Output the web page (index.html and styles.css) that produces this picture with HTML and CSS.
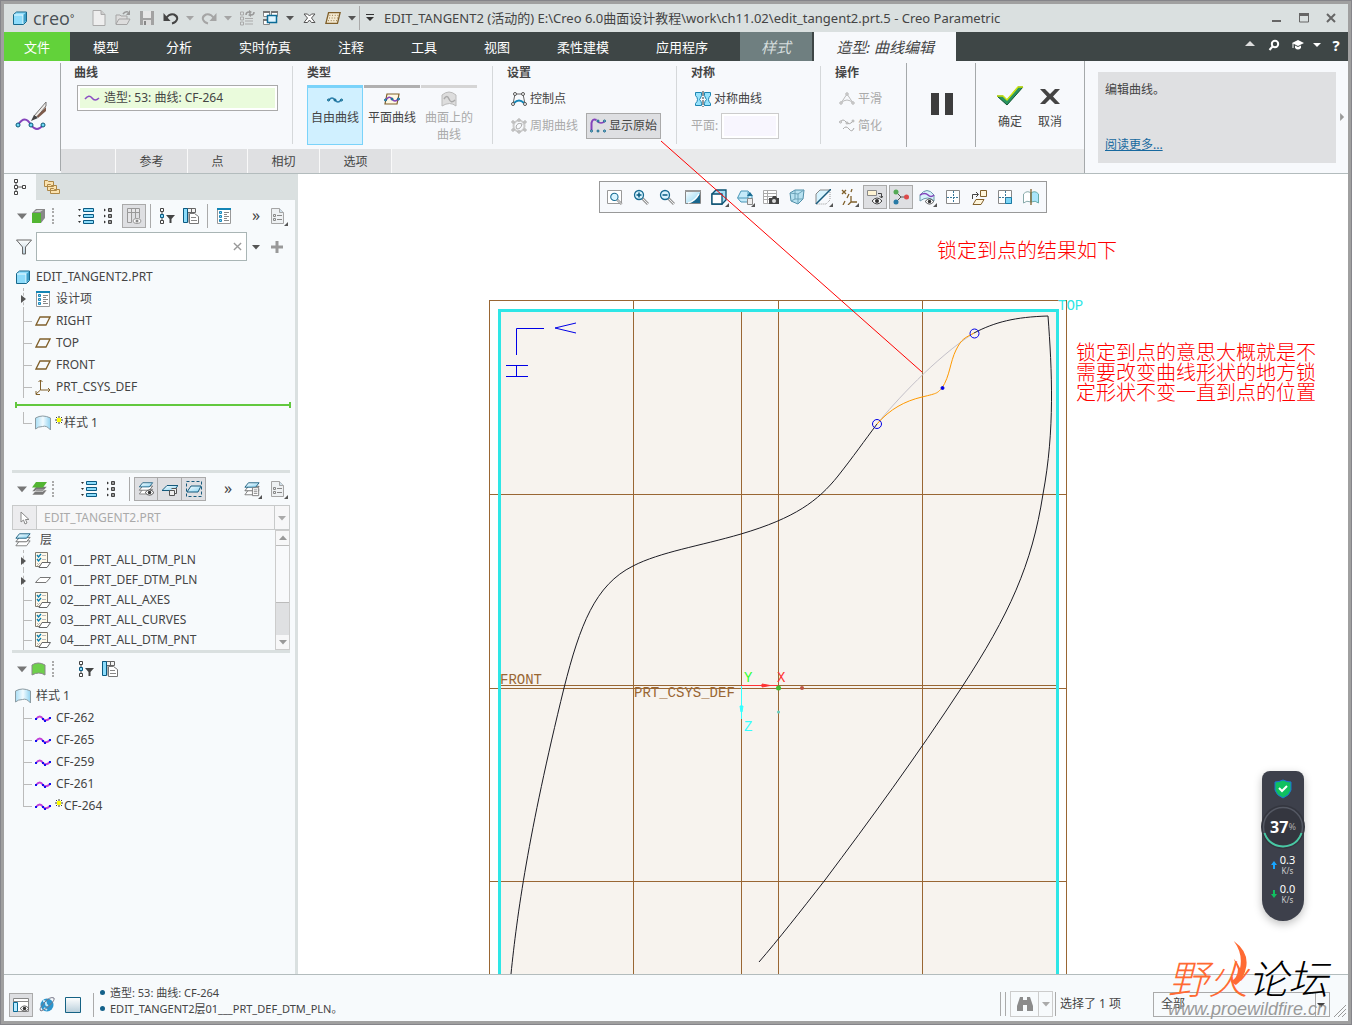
FILE: index.html
```html
<!DOCTYPE html>
<html lang="zh-CN">
<head>
  <meta charset="UTF-8">
  <meta name="viewport" content="width=device-width, initial-scale=1.0">
  <title>EDIT_TANGENT2 - Creo Parametric</title>
  <link rel="stylesheet" href="styles.css">
</head>
<body>
  <!-- shared icons -->
  <svg class="icon-defs" aria-hidden="true">
    <defs>
      <linearGradient id="g-blue" x1="0" y1="0" x2="1" y2="1"><stop offset="0" stop-color="#fff"/><stop offset="1" stop-color="#86d3f2"/></linearGradient>
      <linearGradient id="g-surf" x1="0" x2="1"><stop offset="0" stop-color="#a9def5"/><stop offset=".5" stop-color="#f2fbff"/><stop offset="1" stop-color="#8fd2f0"/></linearGradient>
      <linearGradient id="g-steel" x1="0" y1="0" x2="0" y2="1"><stop offset="0" stop-color="#fff"/><stop offset="1" stop-color="#b9cfdb"/></linearGradient>
    </defs>
    <symbol id="i-cube" viewBox="0 0 16 16"><path d="M1.500 4.500l3-2.500h10v9.500l-3 3h-10z" fill="#8edcfb" stroke="#17688c"/><path d="M2 5h9v9" fill="none" stroke="#e8faff"/><path d="M11.500 5l2.500-2.500V11l-2.500 3z" fill="#3f9fc8"/></symbol>
    <symbol id="i-new" viewBox="0 0 16 16"><path d="M2 .5h8l4 4v11H2z" fill="#eee" stroke="#aaa"/><path d="M10 .5v4h4" fill="#ccc" stroke="#aaa"/></symbol>
    <symbol id="i-open" viewBox="0 0 16 16"><path d="M1 14V5h4l1 1h6v3M1 14l3-5h11l-3 5.500H1z" fill="#ddd" stroke="#a5a5a5"/><path d="M8 4q2-3 5-2" fill="none" stroke="#999" stroke-width="1.500"/><path d="M15 0v5h-4z" fill="#999"/></symbol>
    <symbol id="i-save" viewBox="0 0 16 16"><path d="M1 1h14v14H1z" fill="#a2a2a2"/><path d="M4 1h8v7H4z" fill="#e6e6e6"/><path d="M4 10h8v5H4z" fill="#ddd"/><path d="M5 11h2v4H5z" fill="#888"/></symbol>
    <symbol id="i-undo" viewBox="0 0 16 16"><path d="M3 8q4-5 8-3.500 4 2 3 5-1 3-5 4" fill="none" stroke="currentColor" stroke-width="2"/><path d="M.5 3v8h7z" fill="currentColor"/></symbol>
    <symbol id="i-down" viewBox="0 0 8 8"><path d="M0 2h8L4 6.500z" fill="currentColor"/></symbol>
    <symbol id="i-regen" viewBox="0 0 16 16"><path d="M1.500 2h3v3h-3zM1.500 7h3v3h-3zM1.500 12h3v3h-3zM6 8.500h8M6 11h8M6 14h8" fill="none" stroke="#aaa"/><path d="M7 5q0-3 3-3M15 2q0 3-3 3" fill="none" stroke="#999" stroke-width="1.500"/><path d="M10 0l3 2-3 2zM12 3v4l-3-2z" fill="#999"/></symbol>
    <symbol id="i-windows" viewBox="0 0 16 16"><path d="M.5 1.500h6v5h-6zM8.500 1.500h6v5h-6zM.5 9.500h6v5h-6z" fill="#fff" stroke="#888"/><path d="M0 1h7v2H0zM8 1h7v2H8zM0 9h4v2H0z" fill="#777"/><path d="M4.500 5.500h9v7h-9z" fill="#dff5ff" stroke="#0a6b96" stroke-width="1.500"/></symbol>
    <symbol id="i-x" viewBox="0 0 16 16"><path d="M3 4h3.500L8.500 6l2-2H14l-3.500 4L14 12.500h-3.500l-2-2.500-2 2.500H3L6.500 8z" fill="#fff" stroke="#555"/></symbol>
    <symbol id="i-grid" viewBox="0 0 18 16"><path d="M4 2h13l-3 12H1z" fill="#f4ead2" stroke="#80602b" stroke-width="1.500"/><path d="M5 5h10M4.500 8H15M3.500 11H14" stroke="#80602b" stroke-dasharray="1 2"/></symbol>
    <symbol id="i-wave" viewBox="0 0 16 16"><path d="M1 9q4-5 7-1t7 0" fill="none" stroke="#8c4fc4" stroke-width="1.500"/></symbol>
    <symbol id="i-free" viewBox="0 0 16 16"><path d="M2 9q3-4 6 0t6 0" fill="none" stroke="#2a7fac" stroke-width="1.500"/><g fill="#65d0f5" stroke="#075a80"><circle cx="1.500" cy="9" r="1"/><circle cx="8" cy="9" r="1"/><circle cx="14.500" cy="9" r="1"/></g></symbol>
    <symbol id="i-planar" viewBox="0 0 16 16"><path d="M3 3h12l-2 10H1z" fill="#fff8e3" stroke="#80602b" stroke-width="1.200"/><path d="M2 9q3-5 6-1t6 0" fill="none" stroke="#8443bb" stroke-width="1.500"/><g fill="#65d0f5" stroke="#075a80"><circle cx="1.500" cy="9" r="1"/><circle cx="8" cy="8" r="1"/><circle cx="14.500" cy="8" r="1"/></g></symbol>
    <symbol id="i-onsurf" viewBox="0 0 16 16"><path d="M1 15V4q7-6 14 0v11q-6-5-14 0z" fill="#ddd" stroke="#bbb"/><path d="M3 8q3-5 5 0t6 1" fill="none" stroke="#aaa" stroke-width="1.500"/></symbol>
    <symbol id="i-control" viewBox="0 0 16 16"><path d="M2 13L4 3h8l2 10" fill="none" stroke="#666"/><path d="M3 12q5-5 10 0" fill="none" stroke="#1485b5" stroke-width="2"/><g fill="#fff" stroke="#555"><circle cx="2" cy="13" r="1.500"/><circle cx="4" cy="3" r="1.500"/><circle cx="12" cy="3" r="1.500"/><circle cx="14" cy="13" r="1.500"/></g></symbol>
    <symbol id="i-period" viewBox="0 0 16 16"><circle cx="8" cy="8" r="5.500" fill="none" stroke="#ccc" stroke-width="2"/><path d="M5 9q1-5 6-3-1 5-5 5z" fill="none" stroke="#aaa"/><g fill="#eee" stroke="#aaa"><circle cx="2" cy="4" r="1.200"/><circle cx="8" cy="2" r="1.200"/><circle cx="14" cy="4" r="1.200"/><circle cx="14" cy="12" r="1.200"/><circle cx="8" cy="14" r="1.200"/><circle cx="2" cy="12" r="1.200"/></g></symbol>
    <symbol id="i-orig" viewBox="0 0 16 16"><path d="M1.500 12V5q1-5 5-3" fill="none" stroke="#8443bb" stroke-width="2"/><path d="M7 3q4 4 8 0" fill="none" stroke="#8443bb" stroke-width="1.500"/><g fill="#b8ecff" stroke="#075a80"><circle cx="1.500" cy="13" r="1"/><circle cx="8" cy="13" r="1"/><circle cx="14.500" cy="13" r="1"/><circle cx="8" cy="3" r="1"/><circle cx="14.500" cy="3" r="1"/></g></symbol>
    <symbol id="i-sym" viewBox="0 0 16 16"><path d="M.5 1.500h6v3q-1 3-2 4 2 2 2 4v2h-6v-2q2-2 2-4t-2-4zM15.500 1.500h-6v3q1 3 2 4-2 2-2 4v2h6v-2q-2-2-2-4t2-4z" fill="#97e2fb" stroke="#1b85b2"/><path d="M8 0v16" stroke="#333" stroke-dasharray="5 1 2 1"/></symbol>
    <symbol id="i-smooth" viewBox="0 0 16 16"><path d="M2 12L8 3l6 9M2 12q6-6 12 0" fill="none" stroke="#bbb"/><g fill="#fff" stroke="#aaa"><circle cx="2" cy="12" r="1.200"/><circle cx="8" cy="3" r="1.200"/><circle cx="14" cy="12" r="1.200"/></g></symbol>
    <symbol id="i-simple" viewBox="0 0 16 16"><path d="M1 4q3-4 6 0t7-1M4 11q3-4 6 0t5-1" fill="none" stroke="#aaa"/><g fill="#fff" stroke="#aaa"><circle cx="1.500" cy="4" r="1"/><circle cx="8" cy="5" r="1"/><circle cx="14" cy="3" r="1"/></g></symbol>
    <symbol id="i-nodes" viewBox="0 0 16 16"><path d="M4 3v10M4 8h7" stroke="#555"/><g fill="#fff" stroke="#444"><path d="M2.500.5h3v3h-3zM2.500 6.500h3v3h-3zM2.500 12.500h3v3h-3zM10.500 6.500h3v3h-3z"/></g></symbol>
    <symbol id="i-folders" viewBox="0 0 16 16"><g fill="#fbe2ae" stroke="#ad8746"><path d="M.5 1.500h3l1 1h5v5h-9zM3.500 5.500h3l1 1h5v5h-9zM6.500 9.500h3l1 1h5v4h-9z"/></g></symbol>
    <symbol id="i-expand" viewBox="0 0 16 16"><path d="M5.500.5h10v3h-10zM5.500 6.500h10v3h-10zM5.500 12.500h10v3h-10z" fill="#8cdcfb" stroke="#0a5a82"/><path d="M0 1h3l-1.500 2zM0 7h3l-1.500 2zM0 13h3l-1.500 2z" fill="#333"/></symbol>
    <symbol id="i-collapse" viewBox="0 0 16 16"><path d="M6.500.5h3v3h-3zM6.500 6.500h3v3h-3zM6.500 12.500h3v3h-3z" fill="#999" stroke="#444"/><path d="M2 .5L4 2 2 3.500zM2 6.500L4 8 2 9.500zM2 12.500L4 14l-2 1.500z" fill="#333"/></symbol>
    <symbol id="i-cols" viewBox="0 0 16 16"><path d="M1.500.5h12v4h-12zM1.500 4.500h4v10h-4zM5.500.5v4M9.500.5v10M13.500 4v6" fill="#e6e6e8" stroke="#999"/><ellipse cx="11" cy="13" rx="4" ry="2.500" fill="#fff" stroke="#999"/><circle cx="11" cy="13" r="1.500" fill="#888"/></symbol>
    <symbol id="i-nodefilter" viewBox="0 0 16 16"><path d="M3 2v12" stroke="#444"/><path d="M1.500.5h3v3h-3zM1.500 12.500h3v3h-3z" fill="#fff" stroke="#444"/><path d="M1.500 6.500h3v3h-3z" fill="#8cdcfb" stroke="#0a5a82"/><path d="M7 7h9l-3.500 4v4h-2v-4z" fill="#444"/></symbol>
    <symbol id="i-coldoc" viewBox="0 0 16 16"><path d="M.5.5h12v4h-12zM8.500 0v5M5 4.500v10" fill="#f4f4f4" stroke="#666"/><path d="M.5.5h4v14h-4z" fill="#8cdcfb" stroke="#0a5a82"/><path d="M6.500 5.500h5l4 3v7h-9z" fill="#fff" stroke="#777"/><path d="M8 9.500h5M8 12.500h6" stroke="#888"/></symbol>
    <symbol id="i-list" viewBox="0 0 16 16"><path d="M1.500.5h13v15h-13z" fill="#fff" stroke="#999"/><path d="M1 1h14" stroke="#1485b5" stroke-width="2"/><path d="M3.500 3.500h2v2h-2zM3.500 7.500h2v2h-2zM3.500 11.500h2v2h-2z" fill="#7ed6f8" stroke="#1d86b8"/><path d="M8 4.500h5M8 6.500h3M8 8.500h5M8 10.500h3M8 12.500h5" stroke="#888"/></symbol>
    <symbol id="i-setdoc" viewBox="0 0 16 16"><path d="M1.500.5h8l4 4v11h-12z" fill="#eef1f3" stroke="#a5a5a5"/><path d="M9.500.5v4h4" fill="#cfe0ea" stroke="#a5a5a5"/><path d="M3.500 6.500h2v2h-2zM3.500 10.500h2v2h-2zM7 7.500h5M7 11.500h5" fill="none" stroke="#888"/></symbol>
    <symbol id="i-layers" viewBox="0 0 18 16"><path d="M5 9h12l-4 5.500H1z" fill="#fff" stroke="#777"/><path d="M5 5h12l-4 5H1z" fill="#fff" stroke="#666"/><path d="M5 1h12l-4 5H1z" fill="url(#g-blue)" stroke="#155a7c"/></symbol>
    <symbol id="i-eye" viewBox="0 0 10 8"><path d="M0 4q5-6 10 0-5 6-10 0" fill="#fff" stroke="#444"/><circle cx="5" cy="4" r="2" fill="#333"/></symbol>
    <symbol id="i-plane" viewBox="0 0 16 16"><path d="M5 4h10l-4 8H1z" fill="none" stroke="#80602b" stroke-width="1.300"/></symbol>
    <symbol id="i-csys" viewBox="0 0 16 16"><path d="M5.500 1v10H15M5.500 11L1 15M3.500 3l2-2 2 2M13 9l2 2-2 2M1 12v3.500h4" fill="none" stroke="#80602b"/></symbol>
    <symbol id="i-surf" viewBox="0 0 16 16"><path d="M.5 14V3q7-4 15 0v12q-4-5-8-3.500Q3 11.500.5 14z" fill="url(#g-surf)" stroke="#8b9ba2"/></symbol>
    <symbol id="i-layer" viewBox="0 0 16 16"><path d="M.5.500h12v14H.5z" fill="#fff9ea" stroke="#807c70"/><path d="M2 3l1.500 2L6 2M2 7l1.500 2L6 6" fill="none" stroke="#087fb0" stroke-width="1.300"/><path d="M7 3.500h4M7 7.500h4M2 11l3 3M5 11l-3 3" stroke="#bbb"/><path d="M7 10.500h8.500L12 15.500H4z" fill="#fff" stroke="#666"/></symbol>
    <symbol id="i-flat" viewBox="0 0 16 16"><path d="M5 5.500h10.500l-4.500 5H.5z" fill="#fff" stroke="#777"/></symbol>
    <symbol id="i-curve" viewBox="0 0 16 16"><path d="M1 9q4-5 7 0 3 3 7-1" fill="none" stroke="#c03fd8" stroke-width="2"/><path d="M0 8h2v2H0zM7 8h2v2H7zM9 10h2v2H9zM14 7h2v2h-2z" fill="#1010f0"/></symbol>
    <symbol id="i-star" viewBox="0 0 8 8"><path d="M4 0v8M0 4h8M1 1l6 6M7 1L1 7" stroke="#443" stroke-width="1"/><path d="M2 2h4v4H2z" fill="#ff0"/></symbol>
    <symbol id="i-glass" viewBox="0 0 16 16"><path d="M9 9l6 6" stroke="#999" stroke-width="3"/><path d="M9 9l6 6" stroke="#eee"/><circle cx="6" cy="6" r="4.500" fill="#d9f4ff" stroke="#176b92" stroke-width="1.300"/></symbol>
    <symbol id="i-funnel" viewBox="0 0 16 16"><path d="M.5 1h15l-6 7v7h-3V8z" fill="url(#g-steel)" stroke="#666"/></symbol>
  </svg>

  <header class="titlebar">
    <div class="brand"><svg class="ic"><use href="#i-cube"/></svg><span>creo</span><i>°</i></div>
    <div class="quick">
      <button class="tb" aria-label="新建"><svg class="ic"><use href="#i-new"/></svg></button>
      <button class="tb" aria-label="打开"><svg class="ic"><use href="#i-open"/></svg></button>
      <button class="tb" aria-label="保存"><svg class="ic"><use href="#i-save"/></svg></button>
      <button class="tb" aria-label="撤消"><svg class="ic"><use href="#i-undo"/></svg></button>
      <button class="tb drop faded" aria-label="撤消列表"><svg><use href="#i-down"/></svg></button>
      <button class="tb faded flip" aria-label="重做"><svg class="ic"><use href="#i-undo"/></svg></button>
      <button class="tb drop faded" aria-label="重做列表"><svg><use href="#i-down"/></svg></button>
      <button class="tb" aria-label="重新生成"><svg class="ic"><use href="#i-regen"/></svg></button>
      <button class="tb" aria-label="窗口"><svg class="ic"><use href="#i-windows"/></svg></button>
      <button class="tb drop" aria-label="窗口列表"><svg><use href="#i-down"/></svg></button>
      <button class="tb" aria-label="关闭窗口"><svg class="ic"><use href="#i-x"/></svg></button>
      <button class="tb" aria-label="栅格"><svg class="ic"><use href="#i-grid"/></svg></button>
      <button class="tb drop" aria-label="栅格列表"><svg><use href="#i-down"/></svg></button>
      <span class="vsep"></span>
      <button class="tb more" aria-label="自定义"><svg viewBox="0 0 8 8"><path d="M0 0h8v1H0zM0 3h8L4 7z" fill="#333"/></svg></button>
    </div>
    <h1>EDIT_TANGENT2 (活动的) E:\Creo 6.0曲面设计教程\work\ch11.02\edit_tangent2.prt.5 - Creo Parametric</h1>
    <div class="winbtns">
      <button aria-label="最小化"><svg viewBox="0 0 12 12"><path d="M1 8h9v2H1z" fill="#666"/></svg></button>
      <button aria-label="最大化"><svg viewBox="0 0 12 12"><path d="M1.500 2h9v8h-9z" fill="none" stroke="#666"/><path d="M1 1h10v3H1z" fill="#666"/></svg></button>
      <button aria-label="关闭"><svg viewBox="0 0 12 12"><path d="M2 2l8 8M10 2l-8 8" stroke="#666" stroke-width="2"/></svg></button>
    </div>
  </header>

  <nav class="tabs">
    <button class="file">文件</button>
    <button>模型</button><button>分析</button><button>实时仿真</button><button>注释</button><button>工具</button><button>视图</button><button>柔性建模</button><button>应用程序</button>
    <button class="ctx">样式</button>
    <button class="ctx active">造型: 曲线编辑</button>
    <div class="tabtools">
      <button aria-label="折叠功能区"><svg viewBox="0 0 12 12"><path d="M1 7h10L6 2z" fill="#ddd"/></svg></button>
      <button aria-label="搜索"><svg viewBox="0 0 12 12"><circle cx="7" cy="5" r="3.200" fill="none" stroke="#fff" stroke-width="2"/><path d="M4.500 7.500L1.500 11" stroke="#fff" stroke-width="2"/></svg></button>
      <button aria-label="学习"><svg viewBox="0 0 12 12"><path d="M0 4l6-3 6 3-6 3zM3 6.500l3 1.500 3-1.500V9q-3 3-6 0z" fill="#fff"/><path d="M1 4v5" stroke="#fff"/></svg></button>
      <button class="slim" aria-label="学习列表"><svg viewBox="0 0 12 12"><path d="M2 4h8L6 8z" fill="#fff"/></svg></button>
      <button class="help" aria-label="帮助">?</button>
    </div>
  </nav>

  <section class="ribbon">
    <div class="ribbon-tool">
      <svg viewBox="0 0 34 34"><path d="M3 25q7-11 13 0 6 8 12 0" fill="none" stroke="#8443bb" stroke-width="2"/><path d="M19 16L31 2v4L22 17z" fill="#eeeae6" stroke="#777"/><path d="M22 16l9-9v4l-8 7z" fill="#7e5b4b"/><path d="M16 21l3-6 4 3z" fill="#444"/><g fill="#6ed6f6" stroke="#0c5876"><circle cx="3" cy="25" r="2"/><circle cx="16" cy="25" r="2"/><circle cx="28" cy="25" r="2"/></g></svg>
    </div>
    <div class="ribbon-main">
      <div class="groups">
        <div class="group g-curve">
          <h2>曲线</h2>
          <div class="collector"><svg class="ic"><use href="#i-wave"/></svg><input type="text" aria-label="曲线" value="造型: 53: 曲线: CF-264" readonly></div>
        </div>
        <div class="group g-type">
          <h2>类型</h2>
          <div class="types">
            <button class="on"><svg class="ic"><use href="#i-free"/></svg>自由曲线</button>
            <button><svg class="ic"><use href="#i-planar"/></svg>平面曲线</button>
            <button disabled><svg class="ic"><use href="#i-onsurf"/></svg>曲面上的曲线</button>
          </div>
        </div>
        <div class="group g-set">
          <h2>设置</h2>
          <div class="grow"><button class="cmd"><svg class="ic"><use href="#i-control"/></svg>控制点</button></div>
          <div class="grow"><button class="cmd" disabled><svg class="ic"><use href="#i-period"/></svg>周期曲线</button><button class="cmd pressed"><svg class="ic"><use href="#i-orig"/></svg>显示原始</button></div>
        </div>
        <div class="group g-sym">
          <h2>对称</h2>
          <div class="grow"><button class="cmd"><svg class="ic"><use href="#i-sym"/></svg>对称曲线</button></div>
          <div class="grow"><label for="plane">平面:</label><input id="plane" type="text" disabled></div>
        </div>
        <div class="group g-op">
          <h2>操作</h2>
          <div class="grow"><button class="cmd" disabled><svg class="ic"><use href="#i-smooth"/></svg>平滑</button></div>
          <div class="grow"><button class="cmd" disabled><svg class="ic"><use href="#i-simple"/></svg>简化</button></div>
        </div>
        <div class="group g-pause"><button aria-label="暂停"><svg viewBox="0 0 24 24"><path d="M1 1h8v22H1zM15 1h8v22h-8z" fill="#3d3d3d"/></svg></button></div>
        <div class="group g-ok">
          <button><svg viewBox="0 0 28 24"><path d="M1 12h6l4 4L22 3h5L11 21z" fill="#299460" stroke="#153"/><path d="M1 12h6l4 4L22 3h5" fill="none" stroke="#cde611" stroke-width="1.500"/></svg>确定</button>
          <button><svg viewBox="0 0 28 24"><path d="M4 5h5l5 5 5-5h5l-7 7.500 7 7.500h-5l-5-5-5 5H4l7-7.500z" fill="#444"/></svg>取消</button>
        </div>
      </div>
      <div class="subtabs"><span></span><button>参考</button><button>点</button><button>相切</button><button>选项</button></div>
    </div>
    <aside class="tip">
      <div><p>编辑曲线。</p><a href="#">阅读更多...</a></div>
      <svg viewBox="0 0 6 10"><path d="M0 0l5 5-5 5z" fill="#999"/></svg>
    </aside>
  </section>

  <main class="work">
    <aside class="side">
      <div class="side-tabs">
        <button class="on" aria-label="模型树"><svg class="ic"><use href="#i-nodes"/></svg></button>
        <button aria-label="文件夹浏览器"><svg class="ic"><use href="#i-folders"/></svg></button>
      </div>

      <div class="side-bar">
        <svg class="tri"><use href="#i-down"/></svg>
        <svg class="ic mark" viewBox="0 0 16 16"><path d="M1 5l4-4h9v9l-4 5H1z" fill="#888"/><path d="M1 5h9v10H1z" fill="#52b532"/><path d="M3 4l3-2h6l-3 2z" fill="#ccc"/></svg>
        <span class="dots"></span>
        <button class="tb push" aria-label="全部展开"><svg class="ic"><use href="#i-expand"/></svg></button>
        <button class="tb" aria-label="全部折叠"><svg class="ic"><use href="#i-collapse"/></svg></button>
        <button class="tb pressed" aria-label="树列"><svg class="ic"><use href="#i-cols"/></svg></button>
        <span class="vsep"></span>
        <button class="tb" aria-label="树过滤器"><svg class="ic"><use href="#i-nodefilter"/></svg></button>
        <button class="tb" aria-label="列设置"><svg class="ic"><use href="#i-coldoc"/></svg></button>
        <span class="vsep"></span>
        <button class="tb" aria-label="设计项"><svg class="ic"><use href="#i-list"/></svg></button>
        <button class="tb chev" aria-label="更多">»</button>
        <button class="tb corner" aria-label="设置"><svg class="ic"><use href="#i-setdoc"/></svg></button>
      </div>

      <div class="filter">
        <svg class="ic"><use href="#i-funnel"/></svg>
        <div class="search"><input type="text" aria-label="过滤"><button aria-label="清除"><svg viewBox="0 0 10 10"><path d="M1 1l8 8M9 1L1 9" stroke="#999" stroke-width="1.500"/></svg></button></div>
        <button class="tb drop" aria-label="过滤列表"><svg><use href="#i-down"/></svg></button>
        <button class="tb" aria-label="添加"><svg viewBox="0 0 12 12" class="plus"><path d="M4.500 0h3v4.500H12v3H7.500V12h-3V7.500H0v-3h4.500z" fill="#999"/></svg></button>
      </div>

      <div class="tree model">
        <div class="root"><svg class="ic"><use href="#i-cube"/></svg>EDIT_TANGENT2.PRT</div>
        <ul>
          <li class="more"><svg class="ic"><use href="#i-list"/></svg>设计项</li>
          <li><svg class="ic"><use href="#i-plane"/></svg>RIGHT</li>
          <li><svg class="ic"><use href="#i-plane"/></svg>TOP</li>
          <li><svg class="ic"><use href="#i-plane"/></svg>FRONT</li>
          <li><svg class="ic"><use href="#i-csys"/></svg>PRT_CSYS_DEF</li>
        </ul>
        <div class="insert"></div>
        <ul><li class="last"><svg class="ic"><use href="#i-surf"/></svg><svg class="star"><use href="#i-star"/></svg>样式 1</li></ul>
      </div>

      <div class="split"></div>

      <div class="side-bar layerbar">
        <svg class="tri"><use href="#i-down"/></svg>
        <svg class="ic mark" viewBox="0 0 16 16"><path d="M5 9h11l-4 5H1zM5 5.500h11l-4 5H1z" fill="#777" stroke="#fff" stroke-width=".5"/><path d="M5 1h11l-4 5.500H1z" fill="#52b532"/></svg>
        <span class="dots"></span>
        <button class="tb push" aria-label="全部展开"><svg class="ic"><use href="#i-expand"/></svg></button>
        <button class="tb" aria-label="全部折叠"><svg class="ic"><use href="#i-collapse"/></svg></button>
        <span class="vsep"></span>
        <button class="tb pressed" aria-label="显示层"><svg class="ic" viewBox="0 0 18 16"><use href="#i-layers" width="18" height="15"/><use href="#i-eye" x="8" y="8" width="10" height="8"/></svg></button>
        <button class="tb pressed" aria-label="层项"><svg class="ic" viewBox="0 0 16 16"><path d="M5 4.500h11l-4 5H0z" fill="url(#g-blue)" stroke="#155a7c"/><path d="M7.500 9.500h5v5h-5zM9.500 7.500h5v5h-2" fill="#eee" stroke="#555"/></svg></button>
        <button class="tb pressed" aria-label="隔离层"><svg class="ic" viewBox="0 0 16 16"><path d="M5 5h10l-3 6H1z" fill="url(#g-blue)" stroke="#155a7c"/><path d="M.5.5h15v15H.5z" fill="none" stroke="#175a7c" stroke-dasharray="3 2"/></svg></button>
        <button class="tb chev" aria-label="更多">»</button>
        <button class="tb corner" aria-label="层设置"><svg class="ic" viewBox="0 0 18 16"><use href="#i-layers" width="18" height="16"/><path d="M9.500 6.500h7v9h-7z" fill="#fff" stroke="#777"/><path d="M11 9h4M11 11h4M11 13h4" stroke="#888"/></svg></button>
        <button class="tb corner" aria-label="设置"><svg class="ic"><use href="#i-setdoc"/></svg></button>
      </div>

      <div class="picker">
        <button disabled aria-label="选择"><svg viewBox="0 0 10 14"><path d="M1 1v10l2.500-2L5 13l2-1-1.500-3.500H9z" fill="#fff" stroke="#888"/></svg></button>
        <select disabled aria-label="活动模型"><option>EDIT_TANGENT2.PRT</option></select>
        <svg class="caret"><use href="#i-down"/></svg>
      </div>

      <div class="layerbox">
        <div class="tree layers">
          <div class="root"><svg class="ic"><use href="#i-layers"/></svg>层</div>
          <ul>
            <li class="more"><svg class="ic"><use href="#i-layer"/></svg>01___PRT_ALL_DTM_PLN</li>
            <li class="more"><svg class="ic"><use href="#i-flat"/></svg>01___PRT_DEF_DTM_PLN</li>
            <li><svg class="ic"><use href="#i-layer"/></svg>02___PRT_ALL_AXES</li>
            <li><svg class="ic"><use href="#i-layer"/></svg>03___PRT_ALL_CURVES</li>
            <li><svg class="ic"><use href="#i-layer"/></svg>04___PRT_ALL_DTM_PNT</li>
          </ul>
        </div>
        <div class="scroll"><button class="up" aria-label="向上"><svg><use href="#i-down"/></svg></button><span class="thumb"></span><button aria-label="向下"><svg><use href="#i-down"/></svg></button></div>
      </div>

      <div class="split"></div>

      <div class="side-bar stylebar">
        <svg class="tri"><use href="#i-down"/></svg>
        <svg class="ic mark" viewBox="0 0 16 16"><path d="M1 14V4q6-4 13 0v10q-6-4-13 0z" fill="#6ed04b" stroke="#888"/></svg>
        <span class="dots"></span>
        <button class="tb push" aria-label="树过滤器"><svg class="ic"><use href="#i-nodefilter"/></svg></button>
        <button class="tb" aria-label="列设置"><svg class="ic"><use href="#i-coldoc"/></svg></button>
      </div>
      <div class="tree styles">
        <div class="root"><svg class="ic"><use href="#i-surf"/></svg>样式 1</div>
        <ul>
          <li><svg class="ic"><use href="#i-curve"/></svg>CF-262</li>
          <li><svg class="ic"><use href="#i-curve"/></svg>CF-265</li>
          <li><svg class="ic"><use href="#i-curve"/></svg>CF-259</li>
          <li><svg class="ic"><use href="#i-curve"/></svg>CF-261</li>
          <li class="last"><svg class="ic"><use href="#i-curve"/></svg><svg class="star"><use href="#i-star"/></svg>CF-264</li>
        </ul>
      </div>
    </aside>

    <section class="view">
      <!-- datum planes, style curves, csys -->
      <svg class="model-svg" viewBox="298 174 1050 800" preserveAspectRatio="xMinYMin meet">
        <path d="M500 311h558v663H500z" fill="#f7f3ee"/>
        <g fill="none" stroke="#996633" shape-rendering="crispEdges">
          <path d="M489.500 974V300.500h577V974M633.500 300v674M741.500 311v663M778.500 300v674M922.500 300v674M490 494.500h577M490 688.500h577M500 685.500h558M490 881.500h577"/>
          <path d="M499.500 974V310.500h558V974" stroke="#2ee6e6" stroke-width="3"/>
        </g>
        <g fill="none" stroke="#1c1c24">
          <path d="M511 974C517 915 528 835 564 688C580 625 595 585 633 566C660 552 700 546 741 534C795 518 818 501 838 476C853 457 865 440 877 424"/>
          <path d="M974 333C995 322 1015 317 1048 316C1052 370 1055 430 1043 494C1032 565 1009 615 962 687C916 757 870 820 825 880C800 912 778 940 759 962"/>
          <path d="M877 424C895 402 935 358 974 333" stroke="#c3c0c8"/>
          <path d="M877 424C890 409 905 401 922 397S937 393 942 388C950 376 950 362 956 350S965 338 974 333" stroke="#ff9900"/>
        </g>
        <g fill="none" stroke="#0000e6">
          <circle cx="877" cy="424" r="4.500"/><circle cx="974.500" cy="333.500" r="4.500"/>
          <circle cx="942.500" cy="388" r="1.500" fill="#0000e6"/>
          <path d="M516.500 355v-26.500H544M576 323l-21 5 21 5M506 365.500h22M506 376.500h22M516.500 365v11"/>
        </g>
        <path d="M741 685.500h37M762 684l8 1.500-8 1.500z" stroke="#f33" fill="#f33"/>
        <path d="M741.500 686v33M740 706h3l-1 6h-1z" stroke="#3ff" fill="#3ff"/>
        <circle cx="778.500" cy="688" r="2.500" fill="#4b3"/><circle cx="802" cy="688" r="2" fill="#b54"/><circle cx="778.500" cy="712" r="1.500" fill="#6cb"/>
        <g class="plot">
          <text x="1058" y="310" fill="#2ee6e6">TOP</text>
          <text x="500" y="684" fill="#996633">FRONT</text>
          <text x="634" y="697" fill="#996633">PRT_CSYS_DEF</text>
          <text x="744" y="682" fill="#3f3">Y</text>
          <text x="777" y="682" fill="#f33">X</text>
          <text x="744" y="731" fill="#3ff">Z</text>
        </g>
        <path d="M661 141L922 372" stroke="#f00"/>
      </svg>

      <div class="viewbar">
        <button aria-label="重新调整"><svg viewBox="0 0 16 16"><path d="M.5 1.500h14v13H.5z" fill="#fff" stroke="#999"/><use href="#i-glass" x="2" y="3" width="14" height="13"/></svg></button>
        <button aria-label="放大"><svg viewBox="0 0 16 16"><use href="#i-glass"/><path d="M3.500 6h5M6 3.500v5" stroke="#075a80" stroke-width="1.500"/></svg></button>
        <button aria-label="缩小"><svg viewBox="0 0 16 16"><use href="#i-glass"/><path d="M3.500 6h5" stroke="#075a80" stroke-width="1.500"/></svg></button>
        <button aria-label="重画"><svg viewBox="0 0 16 16"><path d="M.5 1.500h15v13H.5z" fill="url(#g-blue)" stroke="#888"/><path d="M15 4v10H5q6-2 10-10z" fill="#19678e"/><path d="M3 14q7-2 11-9" fill="none" stroke="#fff" stroke-width="1.500"/><path d="M0 2h16" stroke="#999" stroke-width="2"/></svg></button>
        <button class="corner" aria-label="显示样式"><svg viewBox="0 0 16 16"><path d="M1 5l4-4h10v10l-4 4H1z" fill="#a8def4" stroke="#0b5172" stroke-width="1.300"/><path d="M1 5h10v10H1z" fill="#fff" stroke="#0b5172" stroke-width="1.300"/></svg></button>
        <button class="corner" aria-label="已保存方向"><svg viewBox="0 0 16 16"><path d="M4 2h7l4 5v6H4L.5 9z" fill="#c5ebfa" stroke="#4a96b6"/><path d="M1 9h10V3" fill="none" stroke="#4a96b6"/><path d="M13 3l3 4h-6z" fill="#1c6f95"/><path d="M10.500 9.500h5v6h-5z" fill="#eee" stroke="#888"/></svg></button>
        <button aria-label="视图管理器"><svg viewBox="0 0 16 16"><path d="M.5 1.500h13v13H.5zM.5 4.500h13M.5 7.500h13M.5 10.500h13M4.500 1v13" fill="#fff" stroke="#aaa"/><path d="M6 9h3l1-2h3l1 2h2v6H6z" fill="#444"/><circle cx="11" cy="12" r="2" fill="#ddd"/></svg></button>
        <button aria-label="透视图"><svg viewBox="0 0 16 16"><path d="M1 4l5-3h9l-1 9-5 5-7-3z" fill="#b8e2f1" stroke="#4f8fa9"/><path d="M1 4l8 1v10M9 5l6-4M6 1v9l-4 2M6 10h8" fill="none" stroke="#6aa2b8"/></svg></button>
        <button class="corner" aria-label="剖面"><svg viewBox="0 0 16 16"><path d="M1 5l4-4h10L1 15z" fill="#d7f3fe" stroke="#888"/><path d="M15 1v10l-4 4H1" fill="none" stroke="#999" stroke-dasharray="1 1"/><path d="M1 15L16 0" stroke="#175a7c" stroke-width="1.500"/></svg></button>
        <button class="corner" aria-label="基准显示"><svg viewBox="0 0 16 16"><path d="M1 1l4 4M5 1L1 5M11 0l-1 3M8 5L6 9M4 12l-2 4M10 7v6h6M10 13l-3 3" fill="none" stroke="#80602b" stroke-width="1.300"/></svg></button>
        <button class="pressed" aria-label="注释显示"><svg viewBox="0 0 16 16"><path d="M.5 1.500h9v5h-9z" fill="#fff4d3" stroke="#888"/><path d="M11 4.500h3.500V9M12.500 7l2 2 1.500-2" fill="none" stroke="#444"/><use href="#i-eye" x="5" y="8" width="10" height="8"/></svg></button>
        <button class="pressed" aria-label="旋转中心"><svg viewBox="0 0 16 16"><path d="M3 3l5 5h6M8 8l-5 5" fill="none" stroke="#555"/><circle cx="3" cy="3" r="2.500" fill="#55aa55"/><circle cx="13.500" cy="8" r="2.500" fill="#dd4a4a"/><circle cx="3" cy="13" r="2.500" fill="#287aa6"/></svg></button>
        <button class="corner" aria-label="曲线显示"><svg viewBox="0 0 16 16"><path d="M1 6q7-9 14 0v6q-6-6-14 0z" fill="#d9f3fc" stroke="#6c98aa"/><path d="M1 6q5-3 8 0t6 0" fill="none" stroke="#8443bb" stroke-width="1.500"/><use href="#i-eye" x="6" y="9" width="9" height="7"/></svg></button>
        <button aria-label="四视图"><svg viewBox="0 0 16 16"><path d="M1.500 1.500h13v13h-13z" fill="#fff" stroke="#888"/><path d="M8.500 2v12M2 8.500h12" stroke="#39789a" stroke-dasharray="2 1"/></svg></button>
        <button aria-label="活动平面方向"><svg viewBox="0 0 16 16"><path d="M9.500 1.500h6v6h-6zM5 10.500h8l-3 5H2z" fill="#fff6dc" stroke="#80602b"/><path d="M1.500 10V5.500H7M5 3l2.500 2.500L5 8" fill="none" stroke="#444"/></svg></button>
        <button aria-label="下一视图"><svg viewBox="0 0 16 16"><path d="M1.500 1.500h13v13h-13z" fill="#fff" stroke="#888"/><path d="M8.500 8.500h6v6h-6z" fill="#7cd5f6" stroke="#1a7ba6"/><path d="M8.500 2v12M2 8.500h12" stroke="#39789a" stroke-dasharray="2 1"/></svg></button>
        <button aria-label="镜像"><svg viewBox="0 0 16 16"><path d="M8 4Q4 1 .5 5v9q3-3 7.500-1z" fill="#fff" stroke="#8aa"/><path d="M8 4q4-3 7.500 1v9q-3-3-7.500-1z" fill="#a9e5fb" stroke="#6aa"/><path d="M8 0v16" stroke="#80602b" stroke-width="1.300"/></svg></button>
      </div>

      <p class="note note-a">锁定到点的结果如下</p>
      <p class="note note-b">锁定到点的意思大概就是不需要改变曲线形状的地方锁定形状不变一直到点的位置</p>

      <div class="meter">
        <svg class="shield" viewBox="0 0 18 20"><path d="M9 1q4 2 8 2v8q-1 5-8 8-7-3-8-8V3q4 0 8-2z" fill="#10c060" stroke="#1973d8"/><path d="M5 9l3 3 5-5" fill="none" stroke="#fff" stroke-width="2"/></svg>
        <div class="dial"><b>37</b><small>%</small>
          <svg viewBox="0 0 44 44"><circle cx="22" cy="22" r="19.500" fill="none" stroke="#555964" stroke-width="1.500"/><path d="M3.500 28Q8 41 22 41.500 36 41 40.500 28" fill="none" stroke="#48c9a4" stroke-width="2"/></svg>
        </div>
        <div class="rate"><svg viewBox="0 0 6 8"><path d="M3 0l3 4H4v4H2V4H0z" fill="#18a5ff"/></svg><div><p>0.3</p><small>K/s</small></div></div>
        <div class="rate"><svg viewBox="0 0 6 8"><path d="M3 8l3-4H4V0H2v4H0z" fill="#10c060"/></svg><div><p>0.0</p><small>K/s</small></div></div>
      </div>
    </section>
  </main>

  <footer class="status">
    <button class="tb pressed" aria-label="导航器"><svg class="ic" viewBox="0 0 16 16"><path d="M.5 1.500h15v13H.5z" fill="#fff" stroke="#888"/><path d="M1 4.500h14" stroke="#888"/><path d="M.5 5.500h4v9h-4z" fill="#b8eaff" stroke="#0a6b96"/><use href="#i-eye" x="7" y="8" width="9" height="7"/></svg></button>
    <button class="tb" aria-label="浏览器"><svg class="ic" viewBox="0 0 16 16"><circle cx="8" cy="8" r="6.500" fill="#2c95cc"/><path d="M4 4q3 0 3 2.500t2 1.500M5 11l3 2" fill="none" stroke="#c4e9f9" stroke-width="2"/><path d="M2 14Q-1 13 5 6T15 1q1 2-4 7T2 14z" fill="none" stroke="#778"/></svg></button>
    <button class="tb" aria-label="全屏"><svg class="ic" viewBox="0 0 16 16"><path d="M.5.5h15v15H.5z" fill="url(#g-steel)" stroke="#156284"/></svg></button>
    <span class="vsep"></span>
    <ul class="log"><li>造型: 53: 曲线: CF-264</li><li>EDIT_TANGENT2层01___PRT_DEF_DTM_PLN。</li></ul>
    <div class="status-right">
      <span class="vsep"></span><span class="vsep"></span>
      <div class="find"><button aria-label="查找"><svg class="ic" viewBox="0 0 16 16"><path d="M3 1h3v3h4V1h3l3 9v5h-6V9H6v6H0v-5z" fill="#8b8b8b"/></svg></button><button class="tb drop" aria-label="查找列表"><svg><use href="#i-down"/></svg></button></div>
      <span class="vsep"></span>
      <span class="count">选择了 1 项</span>
      <div class="selfilter"><select aria-label="选择过滤器"><option>全部</option></select><svg class="caret"><use href="#i-down"/></svg></div>
      <svg class="grip" viewBox="0 0 12 12"><path d="M0 12L12 0M4 12l8-8M8 12l4-4" stroke="#999"/></svg>
    </div>
    <div class="watermark">
      <p><em>野火</em>论坛</p><span>www.proewildfire.cn</span>
      <svg viewBox="0 0 16 42"><path d="M3 0q14 10 12 24-2 12-10 18l-5-3q7-4 7-12l-4-10q4 4 6 9Q12 12 3 0z" fill="#ff6a33"/></svg>
    </div>
  </footer>
</body>
</html>
```
FILE: styles.css
```css
* { box-sizing: border-box; }
body {
  margin: 0;
  height: 100vh;
  min-height: 700px;
  display: flex;
  flex-direction: column;
  border: 4px solid #a0a0a0;
  outline: 1px solid #85858a;
  outline-offset: -1px;
  background: #f7fafc;
  color: #444;
  font: 12px/16px "Noto Sans", "Noto Sans CJK SC", sans-serif;
  overflow: hidden;
}
button, input, select { font: inherit; color: inherit; }
button { border: 0; padding: 0; background: none; display: flex; align-items: center; justify-content: center; cursor: pointer; }
h1, h2, p, ul { margin: 0; padding: 0; font-weight: normal; }
ul { list-style: none; }
svg { flex: none; display: block; }
.icon-defs { position: absolute; width: 0; height: 0; }
.ic { width: 16px; height: 16px; }
.vsep { width: 1px; height: 24px; background: #aaa; flex: none; }

/* small toolbar buttons */
.tb { width: 24px; height: 24px; flex: none; position: relative; }
.tb.drop { width: 14px; color: #555; }
.tb.drop svg, .caret { width: 8px; height: 8px; }
.tb.faded { color: #a5a5a5; }
.tb.flip svg { transform: scaleX(-1); }
.pressed { background: #dedfe2; border: 1px solid #aaa; }
.corner { position: relative; }
.corner::after { content: ""; position: absolute; right: 2px; bottom: 2px; border: 2px solid #555; border-top-color: transparent; border-left-color: transparent; }

/* title bar */
.titlebar { height: 28px; flex: none; display: flex; align-items: center; background: #dae0e0; }
.brand { width: 83px; display: flex; align-items: center; padding-left: 8px; }
.brand span { margin-left: 5px; font: 18px/24px "Open Sans", sans-serif; color: #4a5055; }
.brand i { font-style: normal; font-size: 10px; }
.quick { display: flex; align-items: center; }
.tb.more { width: 20px; }
.tb.more svg { width: 8px; height: 8px; }
.titlebar h1 { flex: 1; padding-left: 4px; font-size: 13px; white-space: nowrap; overflow: hidden; }
.winbtns { display: flex; padding-right: 4px; }
.winbtns button { width: 27px; height: 24px; }
.winbtns svg { width: 12px; height: 12px; }

/* tabs */
.tabs { height: 29px; flex: none; display: flex; gap: 1px; background: #3e4646; color: #fff; font-size: 13px; }
.tabs > button { padding: 0 23px; white-space: nowrap; }
.tabs .file { width: 66px; margin-right: -1px; background: #62d23a; padding: 0; }
.tabs .ctx { margin-left: 8px; width: 72px; padding: 0; background: #6f7f80; color: #d5dddd; font-size: 15px; font-style: italic; }
.tabs .ctx.active { margin-left: 1px; width: 142px; background: #f7f9fc; color: #444; }
.tabtools { display: flex; margin-left: auto; align-items: center; padding-bottom: 3px; }
.tabtools button { width: 24px; height: 24px; }
.tabtools svg { width: 12px; height: 12px; }
.tabtools .slim { width: 14px; }
.tabtools .help { font-weight: bold; font-size: 15px; }

/* ribbon */
.ribbon { height: 113px; flex: none; display: flex; background: #f7f9fc; border-bottom: 1px solid #b3bcbd; }
.ribbon-tool { width: 57px; display: flex; align-items: center; justify-content: center; border-right: 1px solid #a5a9ab; margin: 2px 0; }
.ribbon-tool svg { width: 34px; height: 34px; }
.ribbon-main { flex: 1; display: flex; flex-direction: column; }
.groups { display: flex; flex: 1; }
.group { padding: 3px 14px 0; position: relative; flex: none; }
.group + .group::before { content: ""; position: absolute; left: -1px; top: 5px; bottom: 5px; width: 1px; background: #d5d8da; }
.group h2 { font-size: 12px; line-height: 18px; font-weight: bold; margin-bottom: 3px; }
.g-curve { width: 232px; padding-left: 13px; }
.g-type { width: 200px; }
.g-set { width: 184px; padding-right: 0; }
.g-sym { width: 144px; }
.g-op { width: 86px; padding-right: 0; }
.groups .g-pause { width: 69px; display: flex; align-items: center; justify-content: center; padding-bottom: 5px; }
.g-ok { flex: 1; display: flex; padding-top: 21px; }
.group.g-pause::before, .group.g-ok::before { background: #a5a9ab; top: 2px; bottom: 2px; }
.g-pause svg { width: 24px; height: 24px; }
.g-ok button { width: 40px; flex-direction: column; justify-content: flex-start; gap: 4px; }
.g-ok svg { width: 28px; height: 28px; }
.collector { display: flex; align-items: center; width: 201px; height: 26px; margin-left: 3px; padding-left: 6px; background: #eafbdc; border: 1px solid #aaa; box-shadow: inset 0 0 0 2px #fff; }
.collector input { width: 160px; margin-left: 4px; padding: 0; border: 0; background: none; outline: 0; }
.types { display: flex; gap: 1px; }
.types button { width: 56px; height: 60px; flex-direction: column; justify-content: flex-start; gap: 2px; padding-top: 3px; border-top: 3px solid #b0b0b0; line-height: 17px; }
.types .on { background: #d0f0ff; border: 1px solid #7ad3fa; border-top-width: 3px; }
button:disabled { color: #aaa; }
.types button:disabled { border-top-color: #d5d5d5; }
.grow { height: 27px; display: flex; align-items: center; }
.cmd { height: 26px; gap: 3px; padding: 0 4px; white-space: nowrap; }
.grow .pressed { margin-left: 4px; padding: 0 3px; border: 1px solid #aaa; }
.g-sym label { color: #aaa; }
.g-sym input { width: 58px; height: 26px; margin-left: 3px; background: #f8f6fe; border: 1px solid #ccc; box-shadow: inset 0 0 0 2px #fff; }
.subtabs { height: 24px; display: flex; gap: 1px; background: #e9eaeb; }
.subtabs > * { width: 71px; background: #dfe0e2; box-shadow: 1px 0 #f9f9f9; padding-top: 1px; }
.subtabs span { width: 54px; }
.subtabs button:nth-child(3) { width: 59px; }
.tip { width: 264px; display: flex; align-items: center; padding-left: 13px; gap: 4px; border-left: 1px solid #a5a9ab; }
.tip div { width: 238px; height: 91px; padding: 10px 7px; display: flex; flex-direction: column; justify-content: space-between; background: #dfe0e2; }
.tip a { color: #17699f; }
.tip svg { width: 5px; height: 8px; }

/* side panel */
.work { flex: 1; display: flex; min-height: 0; }
.side { width: 294px; flex: none; border-right: 3px solid #dae0e0; overflow: hidden; }
.side-tabs { height: 26px; display: flex; background: #dae0e0; margin-right: -3px; }
.side-tabs button { width: 32px; }
.side-tabs .on { background: #f7fafc; }
.side-bar { height: 32px; display: flex; align-items: center; padding: 0 5px 0 13px; }
.tri { width: 10px; height: 10px; color: #777; }
.mark { margin-left: 4px; }
.dots { height: 16px; margin-left: 5px; border-left: 2px dotted #aaa; }
.side-bar .push { margin-left: 20px; }
.side-bar .vsep { margin: 0 4px; }
.side-bar .chev { width: 20px; font-size: 16px; margin-left: auto; padding-bottom: 3px; }
.side-bar .pressed + .pressed { border-left: 0; }
.layerbar .push { margin-left: 23px; }
.layerbar .corner { margin-left: 2px; }
.stylebar { height: 31px; }
.filter { height: 29px; display: flex; align-items: center; padding-left: 12px; }
.search { display: flex; align-items: center; width: 211px; height: 29px; margin-left: 4px; border: 1px solid #a9b5b5; background: #fff; }
.search input { flex: 1; min-width: 0; border: 0; outline: 0; background: none; }
.search button { width: 18px; height: 24px; }
.search button svg { width: 9px; height: 9px; }
.filter .drop { width: 18px; }
.plus { width: 12px; height: 12px; }

.tree.model { height: 209px; padding-top: 5px; }
.root { height: 22px; display: flex; align-items: center; gap: 5px; padding-left: 11px; }
.tree li { height: 22px; display: flex; align-items: center; gap: 5px; padding-left: 31px; position: relative; white-space: nowrap; }
.tree li::before { content: ""; position: absolute; left: 19px; top: 0; bottom: 0; border-left: 1px solid #bbb; }
.tree li::after { content: ""; position: absolute; left: 20px; top: 11px; width: 8px; border-top: 1px solid #bbb; }
.tree li.last::before { bottom: 10px; }
.tree li.more::before { border-left-style: dashed; }
.tree li.more::after { left: 17px; top: 7px; width: 0; border: 4px solid transparent; border-left: 5px solid #555; border-right: 0; }
.tree .star { width: 8px; height: 8px; margin: -6px -4px 0 -1px; }
.insert { height: 2px; margin: 6px 4px 6px 11px; background: #62c83e; position: relative; }
.insert::before, .insert::after { content: ""; position: absolute; top: -2px; left: 0; height: 6px; width: 2px; background: #62c83e; }
.insert::after { left: auto; right: 0; }
.split { height: 3px; margin: 0 5px 0 8px; background: #dae0e0; }
.styles { padding-top: 1px; }

.picker { display: flex; position: relative; height: 25px; margin: 0 5px 0 8px; border: 1px solid #c8caca; background: #f7f7f8; }
.picker button { width: 24px; background: #ececee; border-right: 1px solid #c8caca; }
.picker button svg { width: 10px; height: 14px; }
select { appearance: none; border: 0; background: none; border-radius: 0; opacity: 1; outline: 0; }
.picker select { flex: 1; padding-left: 7px; color: #aaa; border-right: 1px solid #c8caca; margin-right: 14px; }
.picker .caret { position: absolute; right: 3px; top: 8px; color: #aaa; }
.layerbox { display: flex; height: 120px; margin-right: 5px; }
.layers { flex: 1; }
.layers .root { height: 20px; gap: 9px; }
.layers li { height: 20px; gap: 9px; }
.layers li::after { top: 10px; }
.scroll { width: 15px; display: flex; flex-direction: column; justify-content: space-between; background: #dfe0e2; border: 1px solid #ccc; }
.scroll button { height: 14px; background: #f7f7f8; color: #999; }
.scroll button svg { width: 8px; height: 8px; }
.scroll .up svg { transform: scaleY(-1); }
.thumb { height: 58px; margin-bottom: 32px; background: #f8f9fb; border: solid #bbb; border-width: 1px 0; }

/* graphics area */
.view { flex: 1; position: relative; background: #fff; }
.model-svg { position: absolute; inset: 0; width: 100%; height: 100%; overflow: visible; clip-path: inset(-60px 0 0 0); pointer-events: none; z-index: 2; }
.plot { font: 14px "Liberation Mono", monospace; }
.viewbar { position: absolute; left: 301px; top: 7px; display: flex; gap: 2px; padding: 3px; border: 1px solid #999; background: #f7f9fc; }
.viewbar button { width: 24px; height: 24px; }
.viewbar svg { width: 16px; height: 16px; }
.note { position: absolute; color: #f00; font: 300 20px/20px "Noto Sans CJK SC", sans-serif; }
.note-a { left: 639px; top: 66px; }
.note-b { left: 778px; top: 168px; width: 241px; }
.meter { position: absolute; right: 44px; top: 597px; width: 42px; height: 150px; padding-top: 8px; background: #3d404b; border-radius: 8px 8px 21px 21px; box-shadow: 0 3px 8px rgba(0,0,0,.25); color: #fff; display: flex; flex-direction: column; align-items: center; }
.shield { width: 18px; height: 20px; }
.dial { position: relative; width: 44px; height: 44px; margin-top: 6px; border-radius: 50%; background: #34363f; display: flex; align-items: center; justify-content: center; }
.dial b { font-size: 16px; }
.dial small { font-size: 9px; color: #aaa; }
.dial svg { position: absolute; inset: 0; }
.rate { display: flex; align-items: center; gap: 3px; margin-top: 4px; height: 24px; text-align: center; }
.rate svg { width: 6px; height: 8px; }
.rate p { font-size: 11px; line-height: 12px; }
.rate small { display: block; font-size: 8px; line-height: 10px; color: #ccc; }
.rate + .rate { margin-top: 5px; }

/* status bar */
.status { position: relative; z-index: 3; height: 47px; flex: none; display: flex; align-items: flex-end; padding: 0 2px 4px 5px; border-top: 1px solid #b3bcbd; background: #f7fafc; }
.status > .tb { margin-right: 2px; }
.status > .vsep { margin-left: 6px; }
.log { padding-left: 16px; }
.log li { position: relative; font-size: 11px; }
.log li::before { content: ""; position: absolute; left: -10px; top: 5px; width: 5px; height: 5px; border-radius: 50%; background: #14618a; }
.status-right { display: flex; align-items: center; margin-left: auto; }
.status-right .vsep { margin-right: 4px; }
.find { display: flex; width: 43px; height: 26px; border: 1px solid #ccc; margin-right: 2px; }
.find button { width: 28px; height: 24px; }
.find .drop { width: 14px; border-left: 1px solid #ccc; color: #aaa; }
.count { width: 93px; }
.selfilter { position: relative; width: 177px; height: 25px; border: 1px solid #aaa; }
.selfilter select { width: 162px; height: 23px; padding-left: 7px; border-right: 1px solid #aaa; }
.selfilter .caret { position: absolute; right: 4px; top: 8px; }
.grip { width: 12px; height: 12px; align-self: flex-end; margin-left: 4px; }
.watermark { position: absolute; right: 14px; bottom: 3px; width: 166px; pointer-events: none; }
.watermark p { font: italic 300 40px/46px "Noto Sans CJK SC", sans-serif; color: #000; white-space: nowrap; }
.watermark em { color: #ff6a33; }
.watermark span { display: block; font: italic 18px/18px "Liberation Sans", sans-serif; color: #999; }
.watermark svg { position: absolute; left: 62px; top: -13px; width: 18px; height: 44px; }
```
